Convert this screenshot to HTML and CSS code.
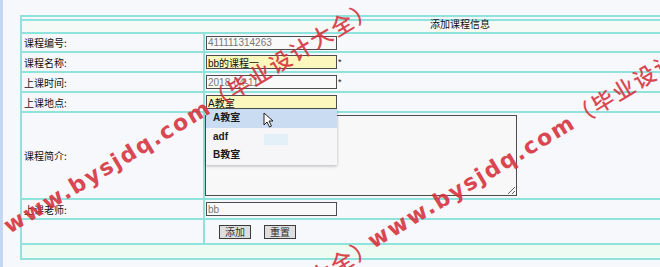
FILE: index.html
```html
<!DOCTYPE html>
<html lang="zh-CN">
<head>
<meta charset="utf-8">
<title>添加课程信息</title>
<link rel="stylesheet" href="styles.css">
</head>
<body>
<div class="page">
  <div class="form">
    <table class="grid">
      <tr class="r-head"><td class="title" colspan="2">添加课程信息</td></tr>
      <tr class="r-1">
        <td class="label">课程编号:</td>
        <td class="value"><div class="field"><input class="inp" type="text" value="411111314263"></div></td>
      </tr>
      <tr class="r-n">
        <td class="label">课程名称:</td>
        <td class="value"><div class="field"><input class="inp hl dark" type="text" value="bb的课程一"><span class="req">*</span></div></td>
      </tr>
      <tr class="r-n">
        <td class="label">上课时间:</td>
        <td class="value"><div class="field"><input class="inp" type="text" value="2018-04-11"><span class="req">*</span></div></td>
      </tr>
      <tr class="r-n">
        <td class="label">上课地点:</td>
        <td class="value"><div class="field"><input class="inp hl dark" type="text" value="A教室"></div></td>
      </tr>
      <tr class="r-area">
        <td class="label">课程简介:</td>
        <td class="value"><textarea class="area"></textarea></td>
      </tr>
      <tr class="r-n">
        <td class="label">上课老师:</td>
        <td class="value"><div class="field"><input class="inp" type="text" value="bb"></div></td>
      </tr>
      <tr class="r-btn">
        <td class="label"></td>
        <td class="value"><div class="buttons"><button class="btn" type="button">添加</button><button class="btn" type="button">重置</button></div></td>
      </tr>
      <tr class="r-foot"><td colspan="2"></td></tr>
    </table>
  </div>
</div>

<ul class="dropdown">
  <li class="opt active">A教室</li>
  <li class="opt">adf</li>
  <li class="opt">B教室</li>
</ul>
<div class="ghost"></div>
<svg class="cursor" width="11" height="16" viewBox="0 0 11 16"><path d="M1 1 L1 13 L4 10 L6.5 15 L8.5 14 L6 9 L10 9 Z" fill="#fff" stroke="#222" stroke-width="1" stroke-linejoin="round"/></svg>

<div class="wm wm1"><span class="lat">www.bysjdq.com</span><span class="cjk">（毕业设计大全）</span></div>
<div class="wm wm2"><span class="lat">www.bysjdq.com</span><span class="cjk">（毕业设计大全）</span></div>
<div class="wm wm3"><span class="lat">www.bysjdq.com</span><span class="cjk">（毕业设计大全）</span></div>
</body>
</html>
```

FILE: styles.css
```css
html, body {
  margin: 0;
  height: 100%;
  overflow: hidden;
}
body {
  position: relative;
  background: #f7f8fb;
  font-family: "Noto Sans CJK SC", "Liberation Sans", sans-serif;
  font-size: 10px;
  color: #111;
}
.page {
  height: 267px;
  box-sizing: border-box;
  border-left: 3px solid #c3d7f3;
  padding: 15px 0 0 17px;
}
.form {
  width: 876px;
  border-top: 2px solid #8fe3dc;
  border-left: 2px solid #8fe3dc;
  padding-top: 2px;
}
.grid {
  width: 100%;
  border-collapse: separate;
  border-spacing: 0;
}
.grid td {
  padding: 0;
  border-bottom: 2px solid #8fe3dc;
  vertical-align: middle;
}
.title {
  border-top: 2px solid #8fe3dc;
  height: 6px;
  line-height: 6px;
  padding-bottom: 5px !important;
  text-align: center;
  background: #f5faf6;
}
.label {
  width: 179px;
  padding-left: 2px !important;
  border-right: 2px solid #8fe3dc;
  white-space: nowrap;
}
.r-1 td { height: 17px; }
.r-n td { height: 18px; }
.r-area td { height: 85px; }
.r-btn td { height: 23px; }
.r-foot td { height: 13px; background: #eefbf3; }

.field {
  display: flex;
  align-items: center;
  padding-left: 1px;
}
.inp {
  box-sizing: border-box;
  width: 131px;
  height: 14px;
  margin: 0;
  padding: 0 1px;
  border: 1px solid #4d4d4d;
  background: #f9f9f9;
  font-family: "Liberation Sans", "Noto Sans CJK SC", sans-serif;
  font-size: 10px;
  color: #777;
  outline: none;
}
.inp.hl { background: #fbf7bd; }
.inp.dark { color: #111; }
.req {
  margin-left: 1px;
  font-size: 9px;
  line-height: 9px;
  font-family: "Liberation Sans", sans-serif;
}
.area {
  display: block;
  box-sizing: border-box;
  width: 312px;
  height: 81px;
  margin: 0;
  border: 1px solid #4d4d4d;
  background: #f8f8f9;
  outline: none;
}
.buttons {
  display: flex;
  gap: 13px;
  padding-left: 14px;
}
.btn {
  box-sizing: border-box;
  width: 32px;
  height: 14px;
  margin: 0;
  padding: 0;
  border: 1px solid #3c3c3c;
  background: #dedede;
  font-family: "Noto Sans CJK SC", sans-serif;
  font-size: 10px;
  line-height: 12px;
  color: #333;
}

.dropdown {
  position: absolute;
  left: 206px;
  top: 109px;
  width: 131px;
  margin: 0;
  padding: 0;
  list-style: none;
  background: #f6f6f8;
  box-shadow: 0 1px 3px rgba(0, 0, 0, 0.28);
}
.opt {
  height: 18.7px;
  line-height: 18px;
  padding-left: 7px;
  font-family: "Liberation Sans", "Noto Sans CJK SC", sans-serif;
  font-weight: bold;
  font-size: 10px;
  color: #1a1a1a;
}
.opt.active { background: #c9dcf2; }
.ghost {
  position: absolute;
  left: 264px;
  top: 134px;
  width: 24px;
  height: 11px;
  background: #e4f0f8;
}
.cursor {
  position: absolute;
  left: 263px;
  top: 112px;
}

.wm {
  position: absolute;
  white-space: nowrap;
  color: #d62f3a;
  opacity: 0.88;
  line-height: 26px;
  transform-origin: 0 50%;
  transform: rotate(-31deg);
  pointer-events: none;
}
.wm .lat {
  font-family: "DejaVu Sans", sans-serif;
  font-size: 22px;
  font-weight: bold;
  letter-spacing: 2px;
}
.wm .cjk {
  font-family: "Noto Sans CJK SC", sans-serif;
  font-size: 22px;
  font-weight: 500;
  letter-spacing: 2px;
}
.wm1 { left: 6px; top: 212px; }
.wm2 { left: 370px; top: 227px; }
.wm3 { left: 6px; top: 449px; }
```
